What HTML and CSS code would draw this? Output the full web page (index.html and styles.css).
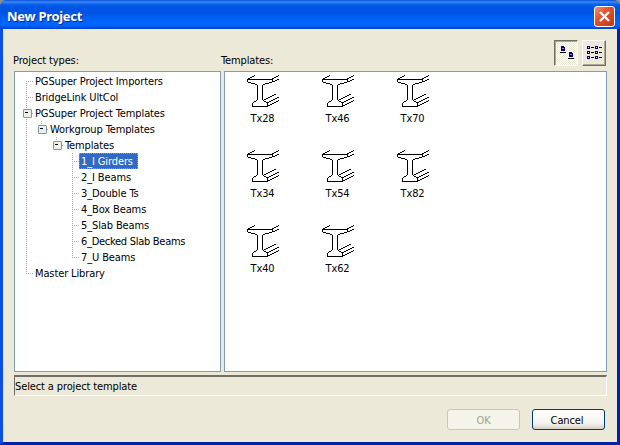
FILE: index.html
```
<!DOCTYPE html>
<html lang="en">
<head>
<meta charset="utf-8">
<title>New Project</title>
<link rel="stylesheet" href="styles.css">
</head>
<body>
<svg class="defs" width="0" height="0">
  <symbol id="girder" viewBox="0 0 32 32">
    <path d="M1 3.500h2M3 2.500h2M5 1.500h2M7 .5h1M25 3.500h2M27 2.500h2M29 1.500h2M31 .5h1M26 6.500h2M28 5.500h2M30 4.500h2M0 4.500h26M.5 5v2M25.500 5v2M1 7.500h3M22 7.500h3M4 8.500h4M18 8.500h4M8 9.500h2M16 9.500h2M10.500 10v15M15.500 10v15M9 25.500h1M16 25.500h1M7 26.500h2M17 26.500h2M6 27.500h1M19 27.500h1M5.500 28v3M20.500 28v3M5 31.500h16M17 24.500h2M19 23.500h2M21 22.500h2M23 21.500h2M25 20.500h2M27 19.500h2M20 27.500h2M22 26.500h2M24 25.500h2M26 24.500h2M28 23.500h2M30 22.500h2M21 30.500h2M23 29.500h2M25 28.500h2M27 27.500h2M29 26.500h2M31 25.500h1"/>
  </symbol>
</svg>
<div class="window">
  <header class="titlebar">
    <h1>New Project</h1>
    <button class="close" aria-label="Close"><svg width="21" height="21" viewBox="0 0 21 21"><path d="M6 6L15 15M15 6L6 15"/></svg></button>
  </header>
  <main class="client">
    <div class="top">
      <span class="types-label">Project types:</span>
      <span class="templates-label">Templates:</span>
      <div class="tools">
        <button class="tool pressed" aria-label="Large icons"><svg width="24" height="26" viewBox="0 0 24 26"><path class="blue" d="M7 6h3v1h1v4H7zM15 12h3v1h1v4h-4z"/><path class="hole" d="M8 8.500h2M16 14.500h2"/><path class="ink" d="M6 12.500h6M14 18.500h6"/></svg></button>
        <button class="tool" aria-label="List"><svg width="24" height="26" viewBox="0 0 24 26"><path class="small" d="M5.500 6.500h2v2h-2zM13.500 6.500h2v2h-2zM5.500 11.500h2v2h-2zM13.500 11.500h2v2h-2zM5.500 16.500h2v2h-2zM13.500 16.500h2v2h-2z"/><path class="ink" d="M9 7.500h3M17 7.500h3M9 12.500h3M17 12.500h3M9 17.500h3M17 17.500h3"/></svg></button>
      </div>
    </div>
    <div class="panes">
      <ul class="tree">
        <li><span>PGSuper Project Importers</span></li>
        <li><span>BridgeLink UltCol</span></li>
        <li class="open"><span>PGSuper Project Templates</span>
          <ul>
            <li class="open"><span>Workgroup Templates</span>
              <ul>
                <li class="open"><span>Templates</span>
                  <ul class="leaves">
                    <li><span class="selected">1_I Girders</span></li>
                    <li><span>2_I Beams</span></li>
                    <li><span>3_Double Ts</span></li>
                    <li><span>4_Box Beams</span></li>
                    <li><span>5_Slab Beams</span></li>
                    <li><span class="long">6_Decked Slab Beams</span></li>
                    <li><span>7_U Beams</span></li>
                  </ul>
                </li>
              </ul>
            </li>
          </ul>
        </li>
        <li><span>Master Library</span></li>
      </ul>
      <div class="list">
        <div class="item"><svg><use href="#girder"/></svg>Tx28</div>
        <div class="item"><svg><use href="#girder"/></svg>Tx34</div>
        <div class="item"><svg><use href="#girder"/></svg>Tx40</div>
        <div class="item"><svg><use href="#girder"/></svg>Tx46</div>
        <div class="item"><svg><use href="#girder"/></svg>Tx54</div>
        <div class="item"><svg><use href="#girder"/></svg>Tx62</div>
        <div class="item"><svg><use href="#girder"/></svg>Tx70</div>
        <div class="item"><svg><use href="#girder"/></svg>Tx82</div>
      </div>
    </div>
    <div class="status">Select a project template</div>
    <div class="actions">
      <button class="btn" disabled>OK</button>
      <button class="btn default">Cancel</button>
    </div>
  </main>
</div>
</body>
</html>
```
FILE: styles.css
```
* { box-sizing: border-box; }
body {
  margin: 0;
  background: #8d8d8d;
  font: 11px/16px "DejaVu Sans Condensed", "DejaVu Sans", sans-serif;
  letter-spacing: -0.12px;
  color: #000;
}
button { font: inherit; letter-spacing: inherit; padding: 0; }
svg { display: block; }
.defs { position: absolute; }
.window {
  width: 620px;
  height: 445px;
  display: flex;
  flex-direction: column;
  border-radius: 7px 7px 0 0;
  overflow: hidden;
  background: #0a3bd8;
}
.titlebar {
  height: 29px;
  flex: none;
  display: flex;
  align-items: center;
  justify-content: space-between;
  padding: 3px 5px 0 7px;
  background: linear-gradient(#0a4cd2 0, #3a8cf8 2px, #0a64ee 4px, #0054e3 7px, #0054e3 13px, #0062fa 20px, #0066ff 25px, #0058e6 27px, #003fc8 29px);
}
.titlebar h1 {
  margin: 0;
  font: bold 13px/24px "Noto Sans", "Open Sans", sans-serif;
  letter-spacing: -0.3px;
  color: #fff;
  text-shadow: 1px 1px 0 #0b2a8c;
}
.close {
  width: 21px;
  height: 21px;
  border: 1px solid #fff;
  border-radius: 3px;
  background: linear-gradient(135deg, #ee9277, #e0522e 40%, #c83510);
}
.close svg { margin: -1px; fill: none; stroke: #fff; stroke-width: 2.4; }
.client {
  flex: 1;
  border: solid;
  border-width: 0 3px 3px;
  border-color: #0a4ee8 #0022a8 #0022a8 #0a4ee8;
  background: #ece9d8;
  padding: 11px 10px 0 11px;
}
.top { display: flex; height: 31px; align-items: flex-start; margin-left: -1px; }
.top span { margin-top: 13px; }
.types-label { width: 208px; }
.templates-label { flex: 1; }
.tools { display: flex; gap: 4px; margin-right: 1px; }
.tool {
  width: 24px;
  height: 26px;
  border: 1px solid;
  border-color: #fff #716f64 #716f64 #fff;
  box-shadow: inset -1px -1px #aca899;
  background: #ece9d8;
}
.tool.pressed {
  border-color: #716f64 #fff #fff #716f64;
  box-shadow: inset 1px 1px #aca899;
  background: repeating-conic-gradient(#fff 0 25%, #ece9d8 0 50%) 0 0 / 2px 2px;
}
.tool svg { margin: -1px; fill: none; shape-rendering: crispEdges; }
.tool .blue { fill: #000080; }
.small { stroke: #000080; }
.hole { stroke: #8f8fc4; }
.ink { stroke: #000; }
.panes { display: flex; gap: 3px; height: 301px; }
.tree, .list { border: 1px solid #7f9db9; background: #fff; }
.tree { width: 207px; margin: 0; padding: 1px 0 0 5px; }
.tree, .tree ul { list-style: none; }
.tree ul { margin: 0; padding: 0 0 0 15px; }
.tree li { position: relative; padding-left: 13px; }
.tree li > ul { margin-left: -13px; }
.tree li > span { display: inline-block; height: 16px; line-height: 18px; padding: 0 2px; vertical-align: top; white-space: nowrap; }
.tree .long { letter-spacing: -0.28px; }
.tree .leaves { padding-left: 16px; }
.tree li::before {
  content: "";
  position: absolute;
  left: 6px;
  top: 8px;
  width: 8px;
  height: 1px;
  background: repeating-linear-gradient(90deg, #aca899 0 1px, transparent 1px 2px);
}
.tree li::after {
  content: "";
  position: absolute;
  left: 6px;
  top: 0;
  bottom: 0;
  width: 1px;
  background: repeating-linear-gradient(#aca899 0 1px, transparent 1px 2px);
}
.tree > li:first-child::after { top: 8px; }
.tree li:last-child::after { bottom: auto; height: 9px; }
.tree li.open > span::before {
  content: "";
  position: absolute;
  z-index: 1;
  left: 3px;
  top: 4px;
  width: 7px;
  height: 7px;
  border: 1px solid #7898b5;
  border-radius: 1px;
  background: linear-gradient(#000, #000) 1px 2px / 3px 1px no-repeat #f0eee8;
}
.tree .selected { background: #316ac5; color: #fff; outline: 1px dotted #d09030; outline-offset: -1px; padding-right: 5px; }
.list {
  width: 383px;
  padding-top: 2px;
  display: grid;
  grid-template-rows: repeat(3, 75px);
  grid-auto-columns: 75px;
  grid-auto-flow: column;
}
.item { text-align: center; line-height: 14px; }
.item svg { width: 32px; height: 32px; margin: 1px 22px 5px; fill: none; stroke: #000; shape-rendering: crispEdges; }
.status {
  height: 21px;
  margin-top: 3px;
  padding: 2px 0 0;
  line-height: 15px;
  border: solid;
  border-width: 2px 1px 1px;
  border-color: #716f64 #fff #fff #716f64;
}
.actions { display: flex; justify-content: flex-end; gap: 12px; margin-top: 13px; padding-right: 2px; }
.btn {
  width: 73px;
  height: 21px;
  border: 1px solid #003c74;
  border-radius: 3px;
  padding: 2px 0 0;
  background: linear-gradient(#fff, #f4f3ee 70%, #d6d0c5);
  color: #000;
}
.btn.default { padding-right: 3px; }
.btn:disabled { border-color: #c9c7ba; background: #f5f4ea; color: #a1a192; }
```
